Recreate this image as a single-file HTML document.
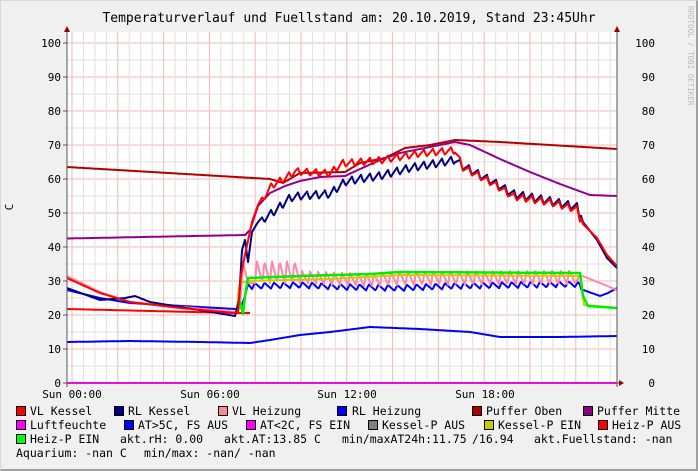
<!DOCTYPE html>
<html><head><meta charset="utf-8"><style>
html,body{margin:0;padding:0;}
body{width:698px;height:471px;background:#f0f0f0;position:relative;overflow:hidden;font-family:"DejaVu Sans Mono","Liberation Mono",monospace;color:#000;}
#frame{position:absolute;left:0;top:0;border-top:1px solid #d8d8d8;border-left:1px solid #d8d8d8;border-right:2px solid #a0a0a0;border-bottom:2px solid #a0a0a0;box-sizing:border-box;width:698px;height:471px;}
.t{position:absolute;font-size:11.5px;white-space:pre;line-height:14px;}
.b{position:absolute;width:8px;height:8px;border:1px solid #000;}
</style></head><body>
<div id="frame"></div>
<svg width="698" height="471" style="position:absolute;left:0;top:0" id="g">
<text x="349" y="22" text-anchor="middle" font-family="DejaVu Sans Mono, monospace" font-size="13">Temperaturverlauf und Fuellstand am: 20.10.2019, Stand 23:45Uhr</text>
<rect x="67" y="32" width="550" height="351" fill="#fff"/>
<g id="grid"></g>
<g id="data" fill="none" stroke-width="2" stroke-linejoin="round"></g>
<line x1="67" y1="27" x2="67" y2="387" stroke="#555" stroke-width="1"/>
<line x1="617" y1="27" x2="617" y2="387" stroke="#555" stroke-width="1"/>
<line x1="63" y1="383" x2="620" y2="383" stroke="#555" stroke-width="1"/>
<polygon points="64,32 70,32 67,26" fill="#900"/>
<polygon points="614,32 620,32 617,26" fill="#900"/>
<polygon points="619,380 619,386 624,383" fill="#900"/>
<line x1="67" y1="383" x2="617" y2="383" stroke="#e010e0" stroke-width="2"/>
<text x="13" y="207" font-size="11" font-family="DejaVu Sans Mono, monospace" transform="rotate(-90 13 207)" text-anchor="middle">C</text>
<text x="688" y="6" font-size="7.5" fill="#bbb" font-family="DejaVu Sans Mono, monospace" transform="rotate(90 688 6)">RRDTOOL / TOBI OETIKER</text>
<g id="lab" font-size="11" font-family="DejaVu Sans Mono, monospace"></g>
</svg>

<div class="b" style="left:16px;top:406px;background:#ff0000"></div><span class="t" style="left:30px;top:404px">VL Kessel</span>
<div class="b" style="left:114px;top:406px;background:#000080"></div><span class="t" style="left:128px;top:404px">RL Kessel</span>
<div class="b" style="left:218px;top:406px;background:#ff8899"></div><span class="t" style="left:232px;top:404px">VL Heizung</span>
<div class="b" style="left:337px;top:406px;background:#0000ff"></div><span class="t" style="left:352px;top:404px">RL Heizung</span>
<div class="b" style="left:472px;top:406px;background:#aa0000"></div><span class="t" style="left:486px;top:404px">Puffer Oben</span>
<div class="b" style="left:583px;top:406px;background:#880088"></div><span class="t" style="left:597px;top:404px">Puffer Mitte</span>

<div class="b" style="left:16px;top:420px;background:#ff00ff"></div><span class="t" style="left:30px;top:418px">Luftfeuchte</span>
<div class="b" style="left:124px;top:420px;background:#0000ff"></div><span class="t" style="left:138px;top:418px">AT&gt;5C, FS AUS</span>
<div class="b" style="left:246px;top:420px;background:#ff00ff"></div><span class="t" style="left:260px;top:418px">AT&lt;2C, FS EIN</span>
<div class="b" style="left:368px;top:420px;background:#808080"></div><span class="t" style="left:382px;top:418px">Kessel-P AUS</span>
<div class="b" style="left:484px;top:420px;background:#cccc00"></div><span class="t" style="left:498px;top:418px">Kessel-P EIN</span>
<div class="b" style="left:598px;top:420px;background:#ff0000"></div><span class="t" style="left:612px;top:418px">Heiz-P AUS</span>

<div class="b" style="left:16px;top:434px;background:#00ff00"></div><span class="t" style="left:30px;top:432px">Heiz-P EIN</span>
<span class="t" style="left:120px;top:432px">akt.rH: 0.00</span>
<span class="t" style="left:224px;top:432px">akt.AT:13.85 C</span>
<span class="t" style="left:342px;top:432px">min/maxAT24h:11.75</span>
<span class="t" style="left:472px;top:432px">/16.94</span>
<span class="t" style="left:534px;top:432px">akt.Fuellstand: -nan</span>

<span class="t" style="left:16px;top:446px">Aquarium: -nan C</span>
<span class="t" style="left:144px;top:446px">min/max: -nan/ -nan</span>

<script>
var NS="http://www.w3.org/2000/svg";
function el(p,n,a){var e=document.createElementNS(NS,n);for(var k in a)e.setAttribute(k,a[k]);p.appendChild(e);return e;}
var grid=document.getElementById("grid");
for(var v=0;v<=100;v+=5){var y=383-3.4*v;el(grid,"line",{x1:67,x2:617,y1:y,y2:y,stroke:(v%10==0?"#f2b8b8":"#e0e0e0"),"stroke-width":1});}
for(var k=0;k<48;k++){var x=72+11.45*k;el(grid,"line",{x1:x,x2:x,y1:32,y2:383,stroke:(k%4==0?"#f2b8b8":"#e0e0e0"),"stroke-width":1});}
var lab=document.getElementById("lab");
for(var v=0;v<=100;v+=10){var y=383-3.4*v+4;
 var t=el(lab,"text",{x:61,y:y,"text-anchor":"end"});t.textContent=v;
 var t2=el(lab,"text",{x:655,y:y,"text-anchor":"end"});t2.textContent=v;
 el(lab,"line",{x1:63,x2:67,y1:y-4,y2:y-4,stroke:"#555"});}
var tl=[[72,"Sun 00:00"],[210,"Sun 06:00"],[347,"Sun 12:00"],[485,"Sun 18:00"]];
tl.forEach(function(a){var t=el(lab,"text",{x:a[0],y:398,"text-anchor":"middle"});t.textContent=a[1];});
function interp(pts,x){for(var i=0;i<pts.length-1;i++){if(x>=pts[i][0]&&x<=pts[i+1][0]){var f=(x-pts[i][0])/((pts[i+1][0]-pts[i][0])||1);return pts[i][1]+f*(pts[i+1][1]-pts[i][1]);}}return pts[pts.length-1][1];}
function series(pts,osc){var out=[];var x0=pts[0][0],x1=pts[pts.length-1][0];
 for(var x=x0;x<=x1;x+=1){var y=interp(pts,x);
  if(osc){osc.forEach(function(o){if(x>=o[0]&&x<=o[1]){var ph=((x-o[0])%o[3])/o[3];var s=o[4]=="spike"?(ph<0.25?ph/0.25:(1-ph)/0.75):(ph<0.3?ph/0.3:1-(ph-0.3)/0.7);y+=o[2]*s;}});}
  out.push(x+","+y.toFixed(1));}
 return out.join(" ");}
var data=document.getElementById("data");
function line(pts,col,osc,w){el(data,"polyline",{points:series(pts,osc),stroke:col,"stroke-width":w||2});}
line([[67,342],[130,341],[200,342],[250,343],[270,340],[300,335],[330,332],[370,327],[420,329],[470,332],[500,337],[560,337],[617,336]],"#0000ff");
line([[67,167],[270,179],[283,183],[300,173],[345,172],[360,163],[385,158],[405,148],[430,145],[455,140],[500,142],[617,149]],"#b00000");
line([[67,238.5],[245,235],[250,230],[258,206],[270,193],[285,186],[300,181],[320,177],[345,176],[360,169],[380,160],[400,153],[430,147],[455,142],[470,145],[500,159],[530,172],[560,184],[590,195],[617,196]],"#900090");
line([[67,309],[235,313],[240,313],[250,313]],"#ff0000");
line([[67,290],[100,298],[130,303],[235,309],[241,308],[245,296],[248,284],[252,289],[300,288],[345,290],[400,291],[450,289],[575,287],[600,296],[608,293],[617,288]],"#0000ff",[[252,580,-6,9.5,"s"]]);
line([[67,276],[100,292],[130,302],[235,312],[240,308],[243,262],[248,283],[300,283],[370,286],[400,285],[575,284],[580,275],[600,283],[617,290]],"#ff88a8",[[255,300,-22,7.5,"spike"],[300,380,-12,8,"spike"],[380,575,-14,8.5,"spike"]]);
line([[237,312],[238,295],[240,283],[248,281],[330,279],[400,275],[580,276],[584,305],[617,308]],"#cccc00");
line([[238,312],[239,300],[241,305],[243,314],[245,296],[248,278],[300,276],[370,274],[400,272],[580,273],[583,296],[588,306],[617,308]],"#00ee00",null,2.5);
line([[67,288],[100,300],[125,298],[135,296],[150,302],[235,316],[239,300],[242,250],[245,240],[248,262],[252,232],[258,222],[265,214],[275,207],[290,194],[300,192],[330,190],[345,178],[360,175],[380,172],[410,164],[440,159],[455,156],[463,162],[493,178],[513,190],[550,197],[577,203],[583,222],[597,240],[607,258],[617,268]],"#000080",[[262,580,8,9,"s"]]);
line([[67,278],[100,293],[130,302],[180,308],[235,313],[238,311],[241,275],[246,250],[252,222],[258,205],[265,192],[272,182],[285,175],[295,168],[330,170],[342,160],[380,157],[420,150],[455,147],[463,164],[493,180],[513,193],[550,199],[577,206],[583,224],[597,238],[607,255],[617,266]],"#ff0000",[[262,580,7,9,"s"]]);
</script>
</body></html>
